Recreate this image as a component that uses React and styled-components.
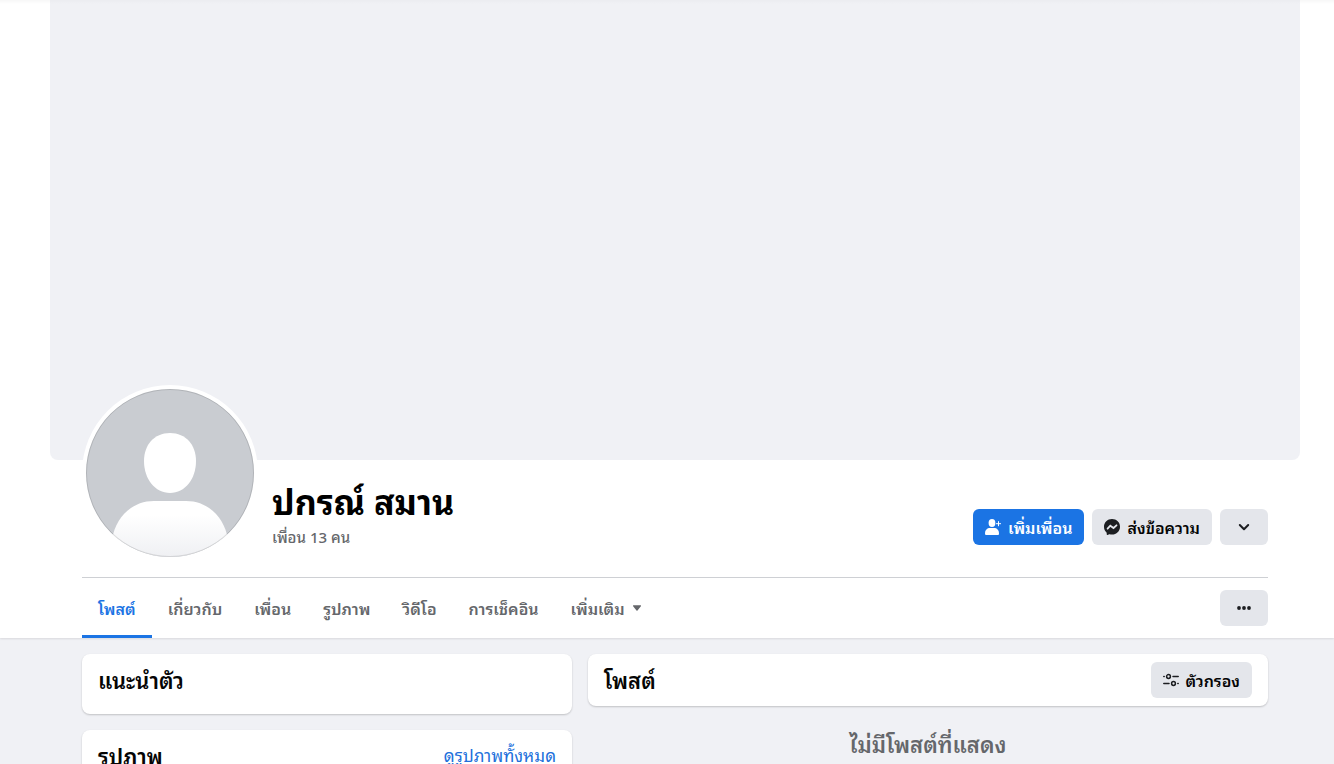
import React from "react";
import styled, { createGlobalStyle } from "styled-components";

const GlobalStyle = createGlobalStyle`
  * { box-sizing: border-box; }
  html { scrollbar-width: none; }
  body {
    margin: 0;
    background: #f0f1f5;
    color: #050505;
    font-family: Tahoma, "Noto Sans Thai Looped", Waree, Loma, "Noto Sans", sans-serif;
    font-size: 16px;
    line-height: 20px;
  }
  h1, h2, p { margin: 0; }
`;

const Header = styled.header`
  background: linear-gradient(rgba(0, 0, 0, 0.03), rgba(0, 0, 0, 0) 4px), #fff;
  box-shadow: 0 1px 2px rgba(0, 0, 0, 0.1);
`;

const Container = styled.div`
  max-width: 1334px;
  margin: 0 auto;
  padding: 0 34px 0 50px;
`;

const Cover = styled.div`
  height: 460px;
  border-radius: 0 0 8px 8px;
  background: linear-gradient(rgba(0, 0, 0, 0.02), rgba(0, 0, 0, 0) 4px), #f0f1f5;
`;

const Inner = styled.div`
  padding: 0 32px;
`;

const Profile = styled.section`
  display: flex;
  align-items: flex-start;
  height: 118px;
  border-bottom: 1px solid #ced0d4;
`;

const AvatarLink = styled.a`
  flex: none;
  margin-top: -75px;
  width: 176px;
  height: 176px;
  padding: 4px;
  border-radius: 50%;
  background: #fff;
  svg { display: block; }
`;

const Identity = styled.div`
  flex: 1;
  padding: 20px 0 0 14px;
`;

const Name = styled.h1`
  font-size: 34px;
  line-height: 40px;
  font-weight: 700;
  color: #000;
`;

const FriendCount = styled.a`
  display: block;
  margin-top: 6px;
  font-size: 15px;
  font-weight: 500;
  color: #65676b;
  text-decoration: none;
`;

const Actions = styled.div`
  display: flex;
  gap: 8px;
  padding-top: 49px;
`;

const Button = styled.button`
  display: inline-flex;
  align-items: center;
  justify-content: center;
  gap: 7px;
  height: 36px;
  min-width: 48px;
  padding: 0 12px;
  border: 0;
  border-radius: 6px;
  font: inherit;
  line-height: 18px;
  font-weight: 600;
  white-space: nowrap;
  cursor: pointer;
  background: ${(p) => (p.$primary ? "#1b74e4" : "#e4e6eb")};
  color: ${(p) => (p.$primary ? "#fff" : "#050505")};
  svg { flex: none; }
`;

const TabBar = styled.nav`
  display: flex;
  align-items: center;
  justify-content: space-between;
  height: 60px;
`;

const Tabs = styled.div`
  display: flex;
  height: 60px;
`;

const Tab = styled.a`
  display: flex;
  align-items: center;
  gap: 8px;
  padding: ${(p) => (p.$active ? "3px 16px 0" : "0 16px")};
  border-bottom: ${(p) => (p.$active ? "3px solid #1b74e4" : "0")};
  color: ${(p) => (p.$active ? "#1b74e4" : "#65676b")};
  font-weight: 600;
  text-decoration: none;
  white-space: nowrap;
`;

const Columns = styled.main`
  display: grid;
  grid-template-columns: 49fr 68fr;
  gap: 16px;
  align-items: start;
  padding-top: 16px;
`;

const Column = styled.div`
  display: flex;
  flex-direction: column;
  gap: 16px;
`;

const Card = styled.section`
  display: flex;
  align-items: flex-start;
  justify-content: space-between;
  height: ${(p) => (p.$compact ? 52 : 60)}px;
  padding: ${(p) => (p.$compact ? "8px 16px" : "13px 16px")};
  border-radius: 8px;
  background: #fff;
  box-shadow: 0 1px 2px rgba(0, 0, 0, 0.2);
`;

const CardTitle = styled.h2`
  font-size: 22px;
  line-height: 24px;
  font-weight: 600;
  padding-top: ${(p) => (p.$compact ? 5 : 0)}px;
`;

const CardLink = styled.a`
  font-size: 17px;
  line-height: 24px;
  color: #216fdb;
  text-decoration: none;
`;

const Empty = styled.p`
  padding-top: 9px;
  text-align: center;
  font-size: 22px;
  line-height: 24px;
  font-weight: 600;
  color: #65676b;
`;

function Avatar() {
  return (
    <svg width="168" height="168" viewBox="0 0 168 168" aria-hidden="true">
      <defs>
        <clipPath id="disc"><circle cx="84" cy="84" r="84" /></clipPath>
        <linearGradient id="shirt" x1="0" y1="0" x2="0" y2="1">
          <stop offset="0.25" stopColor="#fff" />
          <stop offset="1" stopColor="#eff0f3" />
        </linearGradient>
      </defs>
      <g clipPath="url(#disc)">
        <rect width="168" height="168" fill="#c9ccd1" />
        <path d="M84 44c16 0 26 12 26 28 0 18-11 32-26 32S58 90 58 72c0-16 10-28 26-28z" fill="#fff" />
        <path d="M26 150c4-22 20-38 42-38h32c22 0 38 16 42 38v18H26z" fill="url(#shirt)" />
      </g>
      <circle cx="84" cy="84" r="83.5" fill="none" stroke="#000" strokeOpacity="0.12" />
    </svg>
  );
}

function AddFriendIcon() {
  return (
    <svg width="16" height="16" viewBox="0 0 16 16" aria-hidden="true">
      <ellipse cx="7" cy="4" rx="3.4" ry="4" fill="#fff" />
      <path d="M0 14.4C0 11 2.2 9 5 9h4c2.8 0 5 2 5 5.4 0 1-.5 1.6-1.5 1.6h-11C.5 16 0 15.4 0 14.4z" fill="#fff" />
      <path d="M13.5 2.2v5M11 4.7h5" stroke="#fff" strokeWidth="1" />
    </svg>
  );
}

function MessengerIcon() {
  return (
    <svg width="16" height="16" viewBox="0 0 16 16" aria-hidden="true">
      <path d="M8 0C3.500 0 0 3.300 0 7.700c0 2.300.9 4.300 2.500 5.700.1.100.2.300.2.500v1.400c0 .5.500.8.900.6l1.600-.7c.1-.1.300-.1.400 0 .8.200 1.600.3 2.400.3 4.500 0 8-3.300 8-7.800S12.500 0 8 0z" fill="#1c1e21" />
      <path d="M3.600 9.700l2.700-3 3.200 2.300 3-2.700" fill="none" stroke="#e4e6eb" strokeWidth="1.800" strokeLinejoin="miter" strokeLinecap="round" />
    </svg>
  );
}

function ChevronIcon() {
  return (
    <svg width="16" height="16" viewBox="0 0 16 16" aria-hidden="true">
      <path d="M3.800 6l4.200 4.200L12.200 6" fill="none" stroke="#1c1e21" strokeWidth="2" strokeLinecap="round" strokeLinejoin="round" />
    </svg>
  );
}

function DotsIcon() {
  return (
    <svg width="16" height="16" viewBox="0 0 16 16" fill="#1c1e21" aria-hidden="true">
      <circle cx="3" cy="8" r="1.900" />
      <circle cx="8" cy="8" r="1.900" />
      <circle cx="13" cy="8" r="1.900" />
    </svg>
  );
}

function FilterIcon() {
  return (
    <svg width="16" height="16" viewBox="0 0 16 16" fill="none" stroke="#1c1e21" strokeWidth="1.500" strokeLinecap="round" aria-hidden="true">
      <circle cx="5.500" cy="4.500" r="1.900" />
      <path d="M10 4.500h5.200M.8 4.500h.4" />
      <circle cx="10.500" cy="11.500" r="1.900" />
      <path d="M.8 11.500H6M14.800 11.500h.4" />
    </svg>
  );
}

function CaretIcon() {
  return (
    <svg width="8" height="6" viewBox="0 0 8 6" aria-hidden="true">
      <path d="M.6.3h6.800c.6 0 .8.500.5.900L4.500 5.500c-.3.400-.7.400-1 0L.1 1.200C-.2.800 0 .3.600.3z" fill="#65676b" />
    </svg>
  );
}

const TABS = ["โพสต์", "เกี่ยวกับ", "เพื่อน", "รูปภาพ", "วิดีโอ", "การเช็คอิน"];

export default function App() {
  return (
    <>
      <GlobalStyle />
      <Header>
        <Container>
          <Cover />
          <Inner>
            <Profile>
              <AvatarLink href="#photo" aria-label="ปกรณ์ สมาน"><Avatar /></AvatarLink>
              <Identity>
                <Name>ปกรณ์ สมาน</Name>
                <FriendCount href="#friends">เพื่อน 13 คน</FriendCount>
              </Identity>
              <Actions>
                <Button type="button" $primary><AddFriendIcon />เพิ่มเพื่อน</Button>
                <Button type="button"><MessengerIcon />ส่งข้อความ</Button>
                <Button type="button" aria-label="เพิ่มเติม"><ChevronIcon /></Button>
              </Actions>
            </Profile>
            <TabBar>
              <Tabs>
                {TABS.map((label, i) => (
                  <Tab key={label} href="#tab" $active={i === 0}>{label}</Tab>
                ))}
                <Tab href="#more">เพิ่มเติม<CaretIcon /></Tab>
              </Tabs>
              <Button type="button" aria-label="ตัวเลือก"><DotsIcon /></Button>
            </TabBar>
          </Inner>
        </Container>
      </Header>
      <Container>
        <Inner>
          <Columns>
            <Column>
              <Card><CardTitle>แนะนำตัว</CardTitle></Card>
              <Card>
                <CardTitle>รูปภาพ</CardTitle>
                <CardLink href="#photos">ดูรูปภาพทั้งหมด</CardLink>
              </Card>
            </Column>
            <Column>
              <Card $compact>
                <CardTitle $compact>โพสต์</CardTitle>
                <Button type="button"><FilterIcon />ตัวกรอง</Button>
              </Card>
              <Empty>ไม่มีโพสต์ที่แสดง</Empty>
            </Column>
          </Columns>
        </Inner>
      </Container>
    </>
  );
}
